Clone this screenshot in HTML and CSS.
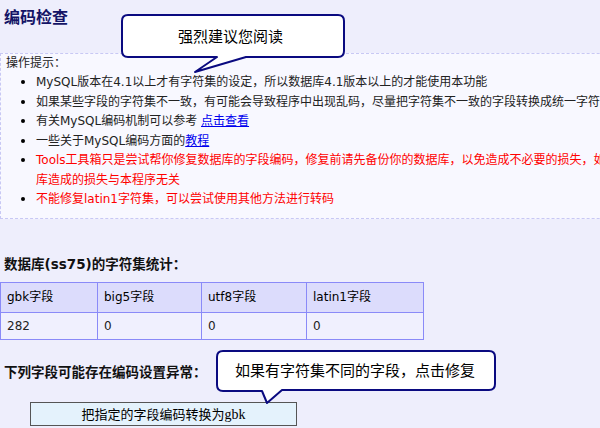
FILE: index.html
```html
<!DOCTYPE html>
<html lang="zh-CN">
<head>
<meta charset="utf-8">
<title>编码检查</title>
<link rel="stylesheet" href="styles.css">
</head>
<body>
<div class="page">
  <h1 class="title">编码检查</h1>

  <div class="tips">
    <div class="tips-label">操作提示：</div>
    <ul class="tips-list">
      <li>MySQL版本在4.1以上才有字符集的设定，所以数据库4.1版本以上的才能使用本功能</li>
      <li>如果某些字段的字符集不一致，有可能会导致程序中出现乱码，尽量把字符集不一致的字段转换成统一字符集</li>
      <li>有关MySQL编码机制可以参考 <a href="#" class="link">点击查看</a></li>
      <li>一些关于MySQL编码方面的<a href="#" class="link">教程</a></li>
      <li class="warn">Tools工具箱只是尝试帮你修复数据库的字段编码，修复前请先备份你的数据库，以免造成不必要的损失，如果修复失败对数据<br>库造成的损失与本程序无关</li>
      <li class="warn">不能修复latin1字符集，可以尝试使用其他方法进行转码</li>
    </ul>
  </div>

  <h2 class="section-title">数据库(ss75)的字符集统计：</h2>
  <table class="stats">
    <tr class="head">
      <td class="c1">gbk字段</td>
      <td class="c2">big5字段</td>
      <td class="c3">utf8字段</td>
      <td class="c4">latin1字段</td>
    </tr>
    <tr class="data">
      <td>282</td>
      <td>0</td>
      <td>0</td>
      <td>0</td>
    </tr>
  </table>

  <h2 class="section-title warn-title">下列字段可能存在编码设置异常：</h2>
  <button class="convert-btn" type="button">把指定的字段编码转换为<span class="latin">gbk</span></button>
</div>

<div class="callout callout-1">
  <svg class="callout-shape" width="226" height="62" viewBox="0 0 226 62">
    <path d="M7 1 H217 Q223 1 223 7 V37 Q223 43 217 43 H125 L74 58 L96 43 H7 Q1 43 1 37 V7 Q1 1 7 1 Z" fill="#ffffff" stroke="#0a0a80" stroke-width="2" stroke-linejoin="round"/>
  </svg>
  <span class="callout-text t1">强烈建议您阅读</span>
</div>

<div class="callout callout-2">
  <svg class="callout-shape" width="282" height="56" viewBox="0 0 282 56">
    <path d="M7 1 H273 Q279 1 279 7 V34 Q279 40 273 40 H66 L51 53 L46 41 H7 Q1 41 1 35 V7 Q1 1 7 1 Z" fill="#ffffff" stroke="#0a0a80" stroke-width="2" stroke-linejoin="round"/>
  </svg>
  <span class="callout-text t2">如果有字符集不同的字段，点击修复</span>
</div>
</body>
</html>
```

FILE: styles.css
```css
html, body {
  margin: 0;
  padding: 0;
  overflow: hidden;
}

body {
  background: #eeeefc;
  font-family: "DejaVu Sans", "Noto Sans CJK SC", sans-serif;
  font-size: 12px;
  color: #222;
  width: 600px;
  height: 428px;
  position: relative;
}

.page {
  width: 720px;
}

.title {
  margin: 0;
  padding: 8px 0 0 4px;
  font-size: 16px;
  line-height: 20px;
  font-weight: bold;
  color: #141466;
}

.tips {
  margin-top: 25px;
  background: #f8f8ff;
  border-top: 1px dashed #c8c8f4;
  border-left: 1px dashed #c8c8f4;
  border-bottom: 1px dashed #c8c8f4;
  padding: 0 0 9px 5px;
}

.tips-label {
  height: 18px;
  line-height: 18px;
  color: #222;
}

.tips-list {
  margin: 0;
  padding-left: 30px;
  list-style: disc;
  white-space: nowrap;
}

.tips-list li {
  line-height: 19.5px;
  min-height: 19.5px;
}

.tips-list li:not(.two-line) {
  height: 19.5px;
}

.tips-list li.warn:nth-child(5) {
  height: 39px;
}

.tips-list li::marker {
  color: #000;
  font-size: 13px;
}

.link {
  color: #0000ee;
  text-decoration: underline;
}

.warn {
  color: #ff0000;
}

.section-title {
  margin: 35px 0 0 0;
  padding-left: 4px;
  font-size: 13.5px;
  line-height: 20px;
  height: 20px;
  font-weight: bold;
  color: #111;
}

.warn-title {
  margin-top: 22px;
}

.stats {
  margin-top: 8px;
  border-collapse: collapse;
  border: 1px solid #8a8af8;
}

.stats td {
  border: 1px solid #8a8af8;
  padding: 0 0 0 6px;
  text-align: left;
  vertical-align: middle;
  font-size: 12px;
  line-height: 16px;
  color: #222;
}

.stats .head td {
  background: #dcdcfc;
  height: 29px;
  color: #000;
}

.stats .data td {
  background: #f0f0fe;
  height: 26px;
}

.c1 { width: 90px; }
.c2 { width: 97px; }
.c3 { width: 98px; }
.c4 { width: 110px; }

.convert-btn {
  display: block;
  margin: 20px 0 0 30px;
  width: 267px;
  height: 24px;
  padding: 0;
  background: #e4f2fc;
  border: 1px solid #555;
  font-family: "Noto Sans CJK SC", sans-serif;
  font-size: 13px;
  color: #000;
  line-height: 22px;
}

.convert-btn .latin {
  font-family: "Liberation Serif", serif;
  font-size: 14px;
}

.callout {
  position: absolute;
}

.callout-shape {
  display: block;
}

.callout-text {
  position: absolute;
  top: 0;
  left: 0;
  font-family: "Noto Sans CJK SC", sans-serif;
  font-size: 15px;
  color: #000;
  white-space: nowrap;
}

.callout-1 {
  left: 121px;
  top: 14px;
}

.t1 {
  left: 57px;
  top: 11px;
  line-height: 22px;
}

.callout-2 {
  left: 216px;
  top: 350px;
}

.t2 {
  left: 19px;
  top: 9px;
  line-height: 22px;
}
```
